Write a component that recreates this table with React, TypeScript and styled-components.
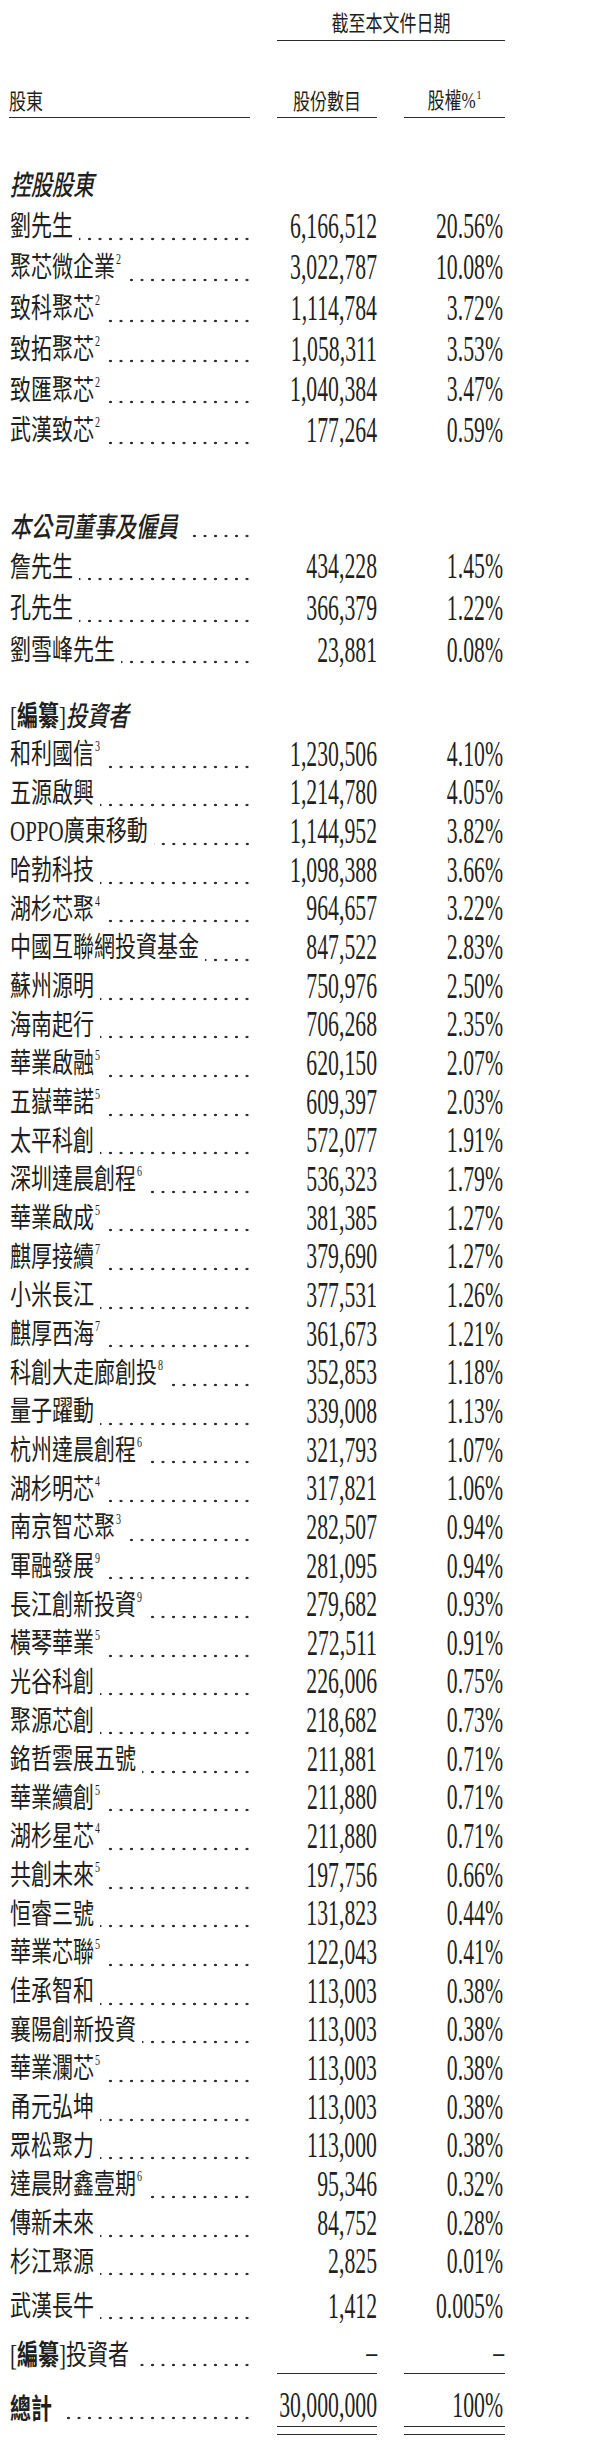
import React from "react";
import styled, { createGlobalStyle } from "styled-components";

const GlobalStyle = createGlobalStyle`
  html, body { margin: 0; padding: 0; background: #ffffff; }
  body {
    color: #231f20;
    font-family: "Liberation Serif", "Noto Sans CJK TC", serif;
  }
`;

const INK = "#2b2b2b";
const CJK = `"Noto Sans CJK TC", "Noto Sans CJK SC", sans-serif`;

const Page = styled.div`
  width: 590px;
  min-height: 2451px;
  box-sizing: border-box;
  padding-left: 9px;
`;

const Row = styled.div<{ $h?: number; $mt?: number; $mb?: number }>`
  display: grid;
  grid-template-columns: 241px 100px 101px;
  column-gap: 27px;
  height: ${(p) => (p.$h ? `${p.$h}px` : "auto")};
  margin-top: ${(p) => p.$mt ?? 0}px;
  margin-bottom: ${(p) => p.$mb ?? 0}px;
`;

const PeriodTitle = styled.div`
  grid-column: 2 / 4;
  box-sizing: border-box;
  display: flex;
  align-items: center;
  justify-content: center;
  padding-top: 3px;
  border-bottom: 1.5px solid ${INK};
`;

const HeadCell = styled.div<{ $center?: boolean }>`
  box-sizing: border-box;
  display: flex;
  align-items: center;
  justify-content: ${(p) => (p.$center ? "center" : "flex-start")};
  border-bottom: 1.5px solid ${INK};
`;

const HeadText = styled.span`
  display: inline-block;
  white-space: nowrap;
  font-family: ${CJK};
  font-size: 17px;
  line-height: 1;
  transform: scaleY(1.3);
`;

const HeadSerif = styled.span`
  font-family: "Liberation Serif", serif;
`;

const HeadNote = styled.sup`
  font-family: "Liberation Serif", serif;
  font-size: 10px;
  line-height: 0;
  vertical-align: 7px;
  margin-left: 1px;
`;

const NameCell = styled.div`
  display: flex;
  align-items: center;
  min-width: 0;
  padding-left: 1px;
`;

const NameText = styled.span`
  display: inline-block;
  flex: none;
  white-space: nowrap;
  font-size: 21px;
  line-height: 1;
  transform: scaleY(1.38);
`;

const HeadingText = styled.span`
  display: inline-block;
  flex: none;
  white-space: nowrap;
  font-family: ${CJK};
  font-style: italic;
  font-weight: 500;
  font-size: 21px;
  line-height: 1;
  transform: scaleY(1.33);
`;

const Plain = styled.span`
  font-family: "Liberation Serif", serif;
  font-style: normal;
  font-weight: 400;
`;

const Bold = styled.span`
  font-family: ${CJK};
  font-style: normal;
  font-weight: 700;
`;

const Note = styled.sup`
  font-family: "Liberation Serif", serif;
  font-size: 10px;
  line-height: 0;
  vertical-align: 10px;
  margin-left: 1px;
`;

/* dotted tab leader, drawn as a repeating dot pattern anchored to the right edge */
const Leader = styled.div<{ $gap?: number }>`
  flex: 1;
  min-width: 0;
  align-self: stretch;
  margin-left: ${(p) => p.$gap ?? 6}px;
  margin-right: 1px;
  background-image: radial-gradient(circle at center, ${INK} 1.05px, rgba(43, 43, 43, 0) 1.6px);
  background-size: 10.5px 4px;
  background-repeat: repeat-x;
  background-position: right -3.25px top calc(50% + 11px);
`;

const ValueCell = styled.div<{ $pr?: number; $ruled?: boolean }>`
  box-sizing: border-box;
  display: flex;
  align-items: center;
  justify-content: flex-end;
  padding-right: ${(p) => p.$pr ?? 0}px;
  border-bottom: ${(p) => (p.$ruled ? `1.5px solid ${INK}` : "none")};
`;

const ValueText = styled.span`
  display: inline-block;
  white-space: nowrap;
  font-size: 21.75px;
  line-height: 1;
  transform: scaleY(1.62);
`;

const TotalCell = styled.div`
  box-sizing: border-box;
  padding-bottom: 6.5px;
  border-bottom: 1.5px solid ${INK};
`;

const TotalValue = styled(ValueCell)`
  height: 40px;
  border-bottom: 1.5px solid ${INK};
`;

const TotalName = styled(NameCell)`
  height: 40px;
`;

const BoldLabel = styled.span`
  display: inline-block;
  flex: none;
  font-family: ${CJK};
  font-weight: 700;
  font-size: 21px;
  line-height: 1;
  transform: scaleY(1.36);
`;

type Entry = [string, string, string, string?];

const control: Entry[] = [
  ["劉先生", "6,166,512", "20.56%"],
  ["聚芯微企業", "3,022,787", "10.08%", "2"],
  ["致科聚芯", "1,114,784", "3.72%", "2"],
  ["致拓聚芯", "1,058,311", "3.53%", "2"],
  ["致匯聚芯", "1,040,384", "3.47%", "2"],
  ["武漢致芯", "177,264", "0.59%", "2"],
];

const directors: Entry[] = [
  ["詹先生", "434,228", "1.45%"],
  ["孔先生", "366,379", "1.22%"],
  ["劉雪峰先生", "23,881", "0.08%"],
];

const investors: Entry[] = [
  ["和利國信", "1,230,506", "4.10%", "3"],
  ["五源啟興", "1,214,780", "4.05%"],
  ["OPPO廣東移動", "1,144,952", "3.82%"],
  ["哈勃科技", "1,098,388", "3.66%"],
  ["湖杉芯聚", "964,657", "3.22%", "4"],
  ["中國互聯網投資基金", "847,522", "2.83%"],
  ["蘇州源明", "750,976", "2.50%"],
  ["海南起行", "706,268", "2.35%"],
  ["華業啟融", "620,150", "2.07%", "5"],
  ["五嶽華諾", "609,397", "2.03%", "5"],
  ["太平科創", "572,077", "1.91%"],
  ["深圳達晨創程", "536,323", "1.79%", "6"],
  ["華業啟成", "381,385", "1.27%", "5"],
  ["麒厚接續", "379,690", "1.27%", "7"],
  ["小米長江", "377,531", "1.26%"],
  ["麒厚西海", "361,673", "1.21%", "7"],
  ["科創大走廊創投", "352,853", "1.18%", "8"],
  ["量子躍動", "339,008", "1.13%"],
  ["杭州達晨創程", "321,793", "1.07%", "6"],
  ["湖杉明芯", "317,821", "1.06%", "4"],
  ["南京智芯聚", "282,507", "0.94%", "3"],
  ["軍融發展", "281,095", "0.94%", "9"],
  ["長江創新投資", "279,682", "0.93%", "9"],
  ["橫琴華業", "272,511", "0.91%", "5"],
  ["光谷科創", "226,006", "0.75%"],
  ["聚源芯創", "218,682", "0.73%"],
  ["銘哲雲展五號", "211,881", "0.71%"],
  ["華業續創", "211,880", "0.71%", "5"],
  ["湖杉星芯", "211,880", "0.71%", "4"],
  ["共創未來", "197,756", "0.66%", "5"],
  ["恒睿三號", "131,823", "0.44%"],
  ["華業芯聯", "122,043", "0.41%", "5"],
  ["佳承智和", "113,003", "0.38%"],
  ["襄陽創新投資", "113,003", "0.38%"],
  ["華業瀾芯", "113,003", "0.38%", "5"],
  ["甬元弘坤", "113,003", "0.38%"],
  ["眾松聚力", "113,000", "0.38%"],
  ["達晨財鑫壹期", "95,346", "0.32%", "6"],
  ["傳新未來", "84,752", "0.28%"],
  ["杉江聚源", "2,825", "0.01%"],
];

function DataRow({ e, h, mt }: { e: Entry; h: number; mt?: number }) {
  const [name, shares, pct, note] = e;
  return (
    <Row $h={h} $mt={mt}>
      <NameCell>
        <NameText>
          {name}
          {note && <Note>{note}</Note>}
        </NameText>
        <Leader />
      </NameCell>
      <ValueCell>
        <ValueText>{shares}</ValueText>
      </ValueCell>
      <ValueCell $pr={2}>
        <ValueText>{pct}</ValueText>
      </ValueCell>
    </Row>
  );
}

export default function App() {
  return (
    <>
      <GlobalStyle />
      <Page>
        <Row $h={41}>
          <div />
          <PeriodTitle>
            <HeadText>截至本文件日期</HeadText>
          </PeriodTitle>
        </Row>

        <Row $h={36} $mt={41}>
          <HeadCell>
            <HeadText>股東</HeadText>
          </HeadCell>
          <HeadCell $center>
            <HeadText>股份數目</HeadText>
          </HeadCell>
          <HeadCell $center>
            <HeadText>
              股權<HeadSerif>%</HeadSerif>
              <HeadNote>1</HeadNote>
            </HeadText>
          </HeadCell>
        </Row>

        <Row $h={40.8} $mt={44.8} $mb={4}>
          <NameCell>
            <HeadingText>控股股東</HeadingText>
          </NameCell>
        </Row>
        {control.map((e, i) => (
          <DataRow key={`c${i}`} e={e} h={40.8} />
        ))}

        <Row $h={41.7} $mt={51.8} $mb={1.3}>
          <NameCell>
            <HeadingText>本公司董事及僱員</HeadingText>
            <Leader $gap={10} />
          </NameCell>
        </Row>
        {directors.map((e, i) => (
          <DataRow key={`d${i}`} e={e} h={41.7} />
        ))}

        <Row $h={38.67} $mt={25.4}>
          <NameCell>
            <HeadingText>
              <Plain>[</Plain>
              <Bold>編纂</Bold>
              <Plain>]</Plain>投資者
            </HeadingText>
          </NameCell>
        </Row>
        {investors.map((e, i) => (
          <DataRow key={`i${i}`} e={e} h={38.67} />
        ))}

        <DataRow e={["武漢長牛", "1,412", "0.005%"]} h={38.67} mt={5.6} />

        <Row $h={38.67} $mt={8.4}>
          <NameCell>
            <NameText>
              [<Bold>編纂</Bold>]投資者
            </NameText>
            <Leader $gap={10} />
          </NameCell>
          <ValueCell $ruled>
            <ValueText>–</ValueText>
          </ValueCell>
          <ValueCell $ruled $pr={1}>
            <ValueText>–</ValueText>
          </ValueCell>
        </Row>

        <Row $mt={13.3}>
          <TotalName>
            <BoldLabel>總計</BoldLabel>
            <Leader $gap={10} />
          </TotalName>
          <TotalCell>
            <TotalValue>
              <ValueText>30,000,000</ValueText>
            </TotalValue>
          </TotalCell>
          <TotalCell>
            <TotalValue $pr={2}>
              <ValueText>100%</ValueText>
            </TotalValue>
          </TotalCell>
        </Row>
      </Page>
    </>
  );
}
